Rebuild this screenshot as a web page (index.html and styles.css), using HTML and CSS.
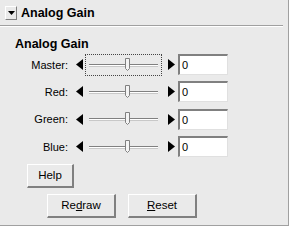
FILE: index.html
```html
<!DOCTYPE html>
<html lang="en">
<head>
	<meta charset="UTF-8">
	<title>Analog Gain</title>
	<link rel="stylesheet" href="styles.css">
</head>
<body>
	<div class="panel">
		<div class="header">
			<span class="dropbtn"><svg width="7" height="4" viewBox="0 0 7 4"><polygon points="0,0 7,0 3.5,4" fill="#000"/></svg></span>
			<span class="head-title">Analog Gain</span>
		</div>
		<div class="sep"></div>
		<div class="content">
			<div class="title">Analog Gain</div>

			<div class="row">
				<span class="label">Master:</span>
				<svg class="arrow" width="7" height="11" viewBox="0 0 7 11"><polygon points="7,0 7,11 0,5.5" fill="#000"/></svg>
				<div class="slider focus">
					<svg width="75" height="20" viewBox="0 0 75 20">
						<rect x="3" y="9" width="69" height="1" fill="#808080"/>
						<rect x="3" y="10" width="69" height="1" fill="#fff"/>
						<rect x="3" y="11" width="69" height="1" fill="#c8c8c8"/>
						<path d="M39.5 3.5 H43.5 V13.5 L41.5 15.5 L39.5 13.5 Z" fill="#f4f4f4" stroke="#808080" stroke-width="1"/>
					</svg>
				</div>
				<svg class="arrow right" width="7" height="11" viewBox="0 0 7 11"><polygon points="0,0 0,11 7,5.5" fill="#000"/></svg>
				<span class="box">0</span>
			</div>

			<div class="row">
				<span class="label">Red:</span>
				<svg class="arrow" width="7" height="11" viewBox="0 0 7 11"><polygon points="7,0 7,11 0,5.5" fill="#000"/></svg>
				<div class="slider">
					<svg width="75" height="20" viewBox="0 0 75 20">
						<rect x="3" y="9" width="69" height="1" fill="#808080"/>
						<rect x="3" y="10" width="69" height="1" fill="#fff"/>
						<rect x="3" y="11" width="69" height="1" fill="#c8c8c8"/>
						<path d="M39.5 3.5 H43.5 V13.5 L41.5 15.5 L39.5 13.5 Z" fill="#f4f4f4" stroke="#808080" stroke-width="1"/>
					</svg>
				</div>
				<svg class="arrow right" width="7" height="11" viewBox="0 0 7 11"><polygon points="0,0 0,11 7,5.5" fill="#000"/></svg>
				<span class="box">0</span>
			</div>

			<div class="row">
				<span class="label">Green:</span>
				<svg class="arrow" width="7" height="11" viewBox="0 0 7 11"><polygon points="7,0 7,11 0,5.5" fill="#000"/></svg>
				<div class="slider">
					<svg width="75" height="20" viewBox="0 0 75 20">
						<rect x="3" y="9" width="69" height="1" fill="#808080"/>
						<rect x="3" y="10" width="69" height="1" fill="#fff"/>
						<rect x="3" y="11" width="69" height="1" fill="#c8c8c8"/>
						<path d="M39.5 3.5 H43.5 V13.5 L41.5 15.5 L39.5 13.5 Z" fill="#f4f4f4" stroke="#808080" stroke-width="1"/>
					</svg>
				</div>
				<svg class="arrow right" width="7" height="11" viewBox="0 0 7 11"><polygon points="0,0 0,11 7,5.5" fill="#000"/></svg>
				<span class="box">0</span>
			</div>

			<div class="row">
				<span class="label">Blue:</span>
				<svg class="arrow" width="7" height="11" viewBox="0 0 7 11"><polygon points="7,0 7,11 0,5.5" fill="#000"/></svg>
				<div class="slider">
					<svg width="75" height="20" viewBox="0 0 75 20">
						<rect x="3" y="9" width="69" height="1" fill="#808080"/>
						<rect x="3" y="10" width="69" height="1" fill="#fff"/>
						<rect x="3" y="11" width="69" height="1" fill="#c8c8c8"/>
						<path d="M39.5 3.5 H43.5 V13.5 L41.5 15.5 L39.5 13.5 Z" fill="#f4f4f4" stroke="#808080" stroke-width="1"/>
					</svg>
				</div>
				<svg class="arrow right" width="7" height="11" viewBox="0 0 7 11"><polygon points="0,0 0,11 7,5.5" fill="#000"/></svg>
				<span class="box">0</span>
			</div>

			<div class="help-row">
				<span class="btn help">Help</span>
			</div>
			<div class="btn-row">
				<span class="btn wide">Re<u>d</u>raw</span>
				<span class="btn wide"><u>R</u>eset</span>
			</div>
		</div>
	</div>
</body>
</html>
```

FILE: styles.css
```css
body {
	margin: 0;
	background: #fff;
	font-family: "Liberation Sans", Arial, sans-serif;
	font-size: 11px;
	color: #000;
}
.panel {
	width: 288px;
	height: 225px;
	background: #eaeaea;
	border-right: 1px solid #a0a0a0;
	border-bottom: 1px solid #a0a0a0;
}
.header {
	display: flex;
	align-items: center;
	height: 21px;
	padding: 4px 0 0 5px;
	box-sizing: border-box;
}
.dropbtn {
	display: flex;
	align-items: center;
	justify-content: center;
	width: 12px;
	height: 14px;
	box-sizing: border-box;
	border-top: 1px solid #fff;
	border-left: 1px solid #fff;
	border-right: 1px solid #808080;
	border-bottom: 1px solid #808080;
	margin-right: 4px;
}
.head-title, .title {
	font-weight: bold;
	font-size: 12.5px;
}
.sep {
	height: 0;
	margin: 4px 5px 0 0;
	border-top: 1px solid #a0a0a0;
	border-bottom: 1px solid #fff;
}
.content {
	padding-left: 15px;
}
.title {
	margin-top: 10px;
	height: 17px;
	line-height: 15px;
}
.row {
	display: flex;
	align-items: center;
	height: 21px;
	margin-left: -15px;
	margin-bottom: 6.4px;
}
.label {
	width: 68px;
	text-align: right;
}
.arrow {
	margin-left: 8px;
}
.arrow.right {
	margin-left: 6px;
}
.slider {
	width: 77px;
	height: 22px;
	margin-left: 2px;
	box-sizing: border-box;
	border: 1px dotted transparent;
	display: flex;
	align-items: center;
}
.slider.focus {
	border-color: #444;
}
.box {
	margin-left: 3px;
	width: 50px;
	height: 21px;
	box-sizing: border-box;
	background: #fff;
	border-top: 2px solid #808080;
	border-left: 2px solid #808080;
	border-right: 1px solid #e0e0e0;
	border-bottom: 1px solid #e0e0e0;
	padding-left: 2px;
	line-height: 18px;
}
.help-row {
	padding-left: 12px;
}
.btn {
	display: inline-flex;
	align-items: center;
	justify-content: center;
	height: 24px;
	box-sizing: border-box;
	border-top: 1px solid #fff;
	border-left: 1px solid #fff;
	border-right: 2px solid #808080;
	border-bottom: 2px solid #808080;
	font-size: 11.5px;
}
.help {
	width: 47px;
}
.btn-row {
	display: flex;
	gap: 12px;
	margin-top: 6px;
	padding-left: 32px;
}
.wide {
	width: 69px;
}
.btn u {
	text-underline-offset: 1px;
}
```
